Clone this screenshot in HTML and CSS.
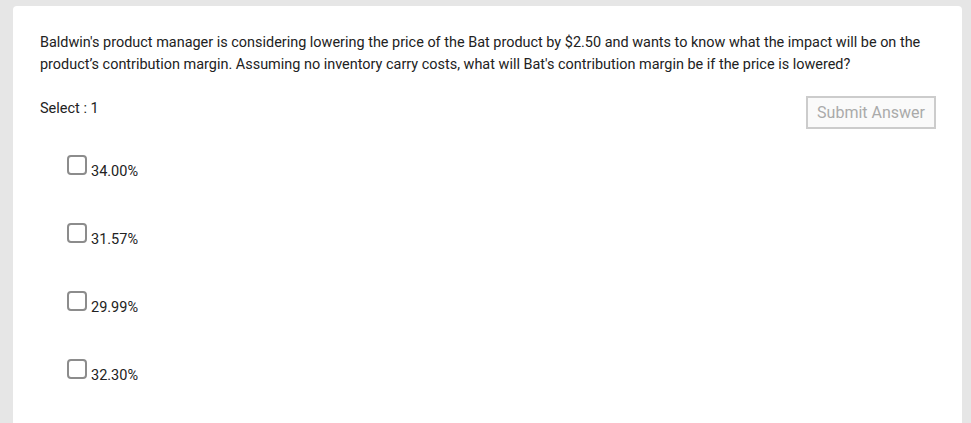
FILE: index.html
```html
<!DOCTYPE html>
<html>
<head>
<meta charset="utf-8">
<link rel="stylesheet" href="styles.css">
</head>
<body>
<div class="card">
  <p class="question">Baldwin's product manager is considering lowering the price of the Bat product by $2.50 and wants to know what the impact will be on the product’s contribution margin. Assuming no inventory carry costs, what will Bat's contribution margin be if the price is lowered?</p>
  <div class="toolbar">
    <span class="select">Select : 1</span>
    <button class="submit" disabled>Submit Answer</button>
  </div>
  <ul class="options">
    <li class="option"><span class="box"></span><span class="label">34.00%</span></li>
    <li class="option"><span class="box"></span><span class="label">31.57%</span></li>
    <li class="option"><span class="box"></span><span class="label">29.99%</span></li>
    <li class="option"><span class="box"></span><span class="label">32.30%</span></li>
  </ul>
</div>
</body>
</html>
```
FILE: styles.css
```css
html, body {
  margin: 0;
  padding: 0;
  background: #e6e6e6;
  height: 100%;
  overflow: hidden;
}
body {
  padding: 6px 9px 0 13px;
  font-family: Roboto, "Liberation Sans", sans-serif;
  color: #222;
}
.card {
  background: #fff;
  border-radius: 4px;
  padding: 26px 27px 0 27px;
  height: 500px;
}
.question {
  margin: 0;
  font-size: 14.45px;
  line-height: 22px;
  color: #222;
}
.toolbar {
  display: flex;
  justify-content: space-between;
  align-items: flex-start;
  margin-top: 20px;
  margin-right: -1px;
}
.select {
  font-size: 14.5px;
  line-height: 17px;
  padding-top: 4px;
  color: #222;
}
.submit {
  font-family: Roboto, "Liberation Sans", sans-serif;
  font-size: 16px;
  color: #aaa;
  background: #fafafa;
  border: 2px solid #ccc;
  height: 33px;
  padding: 0 9px;
  border-radius: 0;
}
.options {
  list-style: none;
  margin: 26px 0 0 27px;
  padding: 0;
}
.option {
  display: flex;
  align-items: flex-start;
  height: 68px;
}
.box {
  width: 20px;
  height: 20px;
  border: 2px solid #8c8c8c;
  border-radius: 4px;
  box-sizing: border-box;
  flex: none;
}
.label {
  font-size: 14.5px;
  line-height: 16px;
  margin-top: 9px;
  margin-left: 4px;
  color: #222;
}
```
